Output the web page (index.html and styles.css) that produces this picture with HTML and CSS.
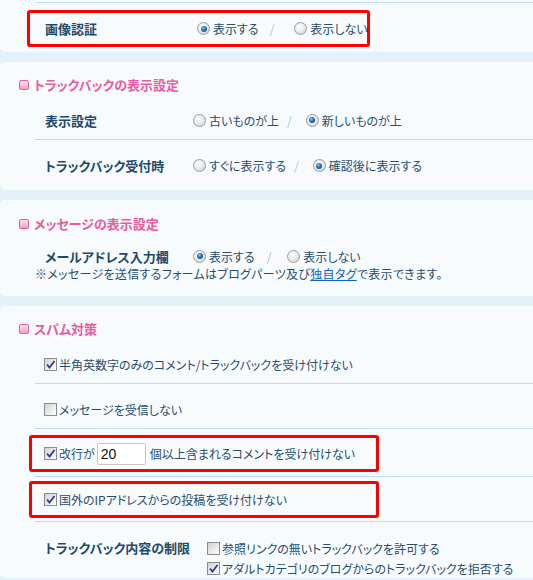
FILE: index.html
```html
<!DOCTYPE html>
<html lang="ja">
<head>
<meta charset="utf-8">
<title>設定</title>
<link rel="stylesheet" href="styles.css">
</head>
<body>
<div class="page">
  <section class="panel panel-first">
    <div class="topline"></div>
    <div class="hl hl-wide">
      <div class="label label-wide">画像認証</div>
      <div class="choices">
        <span class="radio on"></span><span class="opt">表示する</span><span class="sep sep-wide">/</span><span class="radio"></span><span class="opt">表示しない</span>
      </div>
    </div>
  </section>

  <section class="panel">
    <h2 class="head"><span class="mark"></span>トラックバックの表示設定</h2>
    <div class="row">
      <div class="label">表示設定</div>
      <div class="choices">
        <span class="radio"></span><span class="opt">古いものが上</span><span class="sep">/</span><span class="radio on"></span><span class="opt">新しいものが上</span>
      </div>
    </div>
    <div class="row last">
      <div class="label">トラックバック受付時</div>
      <div class="choices">
        <span class="radio"></span><span class="opt">すぐに表示する</span><span class="sep">/</span><span class="radio on"></span><span class="opt">確認後に表示する</span>
      </div>
    </div>
  </section>

  <section class="panel panel-msg">
    <h2 class="head"><span class="mark"></span>メッセージの表示設定</h2>
    <div class="msg">
      <div class="msg-line">
        <div class="label">メールアドレス入力欄</div>
        <div class="choices">
          <span class="radio on"></span><span class="opt">表示する</span><span class="sep sep-msg">/</span><span class="radio"></span><span class="opt">表示しない</span>
        </div>
      </div>
      <p class="note">※メッセージを送信するフォームはブログパーツ及び<a href="#" class="link">独自タグ</a>で表示できます。</p>
    </div>
  </section>

  <section class="panel panel-spam">
    <h2 class="head"><span class="mark"></span>スパム対策</h2>
    <div class="row check-row">
      <span class="cb on"><svg viewBox="0 0 11 11" width="11" height="11"><path d="M2 5.5 L4.5 8.5 L9.5 2" fill="none" stroke="#2b3f8e" stroke-width="1.8"/></svg></span>
      <span class="opt">半角英数字のみのコメント/トラックバックを受け付けない</span>
    </div>
    <div class="row check-row">
      <span class="cb"></span>
      <span class="opt">メッセージを受信しない</span>
    </div>
    <div class="row box-row box-row-a">
      <div class="hl hl-check">
        <span class="cb on"><svg viewBox="0 0 11 11" width="11" height="11"><path d="M2 5.5 L4.5 8.5 L9.5 2" fill="none" stroke="#2b3f8e" stroke-width="1.8"/></svg></span>
        <span class="opt">改行が</span><span class="num">20</span><span class="opt opt-after">個以上含まれるコメントを受け付けない</span>
      </div>
    </div>
    <div class="row box-row box-row-b">
      <div class="hl hl-check">
        <span class="cb on"><svg viewBox="0 0 11 11" width="11" height="11"><path d="M2 5.5 L4.5 8.5 L9.5 2" fill="none" stroke="#2b3f8e" stroke-width="1.8"/></svg></span>
        <span class="opt">国外のIPアドレスからの投稿を受け付けない</span>
      </div>
    </div>
    <div class="limit">
      <div class="label label-limit">トラックバック内容の制限</div>
      <div class="limit-list">
        <div class="limit-item"><span class="cb"></span><span class="opt">参照リンクの無いトラックバックを許可する</span></div>
        <div class="limit-item"><span class="cb on"><svg viewBox="0 0 11 11" width="11" height="11"><path d="M2 5.5 L4.5 8.5 L9.5 2" fill="none" stroke="#2b3f8e" stroke-width="1.8"/></svg></span><span class="opt">アダルトカテゴリのブログからのトラックバックを拒否する</span></div>
      </div>
    </div>
  </section>
</div>
</body>
</html>
```

FILE: styles.css
```css
html, body {
  margin: 0;
  padding: 0;
}
body {
  background: #e3f1fb;
  font-family: "Noto Sans CJK JP", "Noto Sans", sans-serif;
  font-size: 12px;
  color: #284d6c;
  font-feature-settings: "palt" 1;
  width: 533px;
  height: 580px;
  overflow: hidden;
}
.page {
  width: 533px;
}
.panel {
  background: #f7fbfe;
  border-radius: 5px;
  margin-right: -10px;
  margin-bottom: 10px;
  padding-top: 15px;
  padding-bottom: 5px;
}
.panel-first {
  border-radius: 0 0 5px 5px;
  padding-top: 2px;
  padding-bottom: 5px;
}
.topline {
  height: 1px;
  margin-left: 36px;
  background: #bcdcf1;
}
.head {
  margin: 0 0 2px 0;
  padding-left: 19px;
  height: 16px;
  line-height: 16px;
  display: flex;
  align-items: center;
  font-size: 13px;
  font-weight: bold;
  color: #ea5aa0;
}
.mark {
  width: 8px;
  height: 8px;
  border: 1px solid #e0609e;
  border-radius: 2px;
  background: linear-gradient(#fde3ef, #f49cc6);
  margin-right: 5px;
}
.row {
  margin-left: 35px;
  height: 45px;
  box-sizing: border-box;
  padding-top: 6px;
  border-bottom: 1px solid #bcdcf1;
  display: flex;
  align-items: center;
}
.row.last {
  border-bottom: none;
}
.label {
  width: 148px;
  padding-left: 10px;
  font-size: 13px;
  font-weight: bold;
  color: #1e4a6b;
  white-space: nowrap;
  flex-shrink: 0;
}
.label-wide {
  width: 152px;
  padding-left: 0;
}
.choices {
  display: flex;
  align-items: center;
  white-space: nowrap;
}
.opt {
  white-space: nowrap;
}
.sep {
  color: #9cc5e3;
  margin: 0 14px 0 8px;
}
.sep-wide {
  margin: 0 20px 0 11px;
}
.sep-msg {
  margin: 0 16px 0 12px;
}
.radio {
  position: relative;
  width: 11px;
  height: 11px;
  border: 1px solid #9b9b9b;
  border-radius: 50%;
  background: radial-gradient(circle at 40% 35%, #ffffff 0, #f2f2f2 30%, #cfcfcf 100%);
  margin-right: 3px;
  flex-shrink: 0;
}
.radio.on::after {
  content: "";
  position: absolute;
  left: 2.5px;
  top: 2.5px;
  width: 6px;
  height: 6px;
  border-radius: 50%;
  background: radial-gradient(circle at 40% 35%, #8fd0f5 0, #2a7fc0 35%, #0c3c68 100%);
}
.hl {
  border: 3px solid #ff0000;
  border-radius: 3px;
  box-sizing: border-box;
  height: 37px;
  display: flex;
  align-items: center;
}
.hl-wide {
  margin-top: 7px;
  margin-left: 27px;
  width: 343px;
  padding-left: 15px;
}
.hl-check {
  margin-left: -6px;
  width: 350px;
  padding-left: 12px;
}
.box-row {
  height: auto;
  padding-top: 0;
}
.box-row-a {
  padding-top: 6px;
  padding-bottom: 4px;
}
.box-row-b {
  padding-top: 4px;
  padding-bottom: 3px;
}
.check-row {
  padding-left: 9px;
}
.cb {
  width: 11px;
  height: 11px;
  border: 1px solid #8c8c8c;
  background: linear-gradient(135deg, #d2d2d2, #ffffff);
  margin-right: 2px;
  flex-shrink: 0;
  display: flex;
  align-items: center;
  justify-content: center;
}
.cb svg {
  display: block;
}
.num {
  width: 44px;
  height: 20px;
  border: 1px solid #c6c6c6;
  border-radius: 2px;
  background: #ffffff;
  margin: 0 4px 0 2px;
  padding-left: 3px;
  font-family: "Liberation Sans", Arial, sans-serif;
  font-size: 14px;
  line-height: 20px;
  color: #111111;
}
.panel-msg {
  padding-top: 16px;
  padding-bottom: 13px;
}
.msg {
  margin-top: 15px;
}
.msg-line {
  margin-left: 35px;
  height: 18px;
  display: flex;
  align-items: center;
}
.note {
  margin: 0 0 0 35px;
  height: 18px;
  line-height: 18px;
  white-space: nowrap;
  letter-spacing: 0.3px;
}
.link {
  color: #0a66c2;
  text-decoration: underline;
}
.panel-spam {
  padding-bottom: 0;
  margin-bottom: 0;
}
.limit {
  margin-left: 35px;
  padding-top: 16px;
  display: flex;
}
.label-limit {
  width: 162px;
  line-height: 20px;
}
.limit-item {
  height: 20px;
  display: flex;
  align-items: center;
  white-space: nowrap;
}
```
